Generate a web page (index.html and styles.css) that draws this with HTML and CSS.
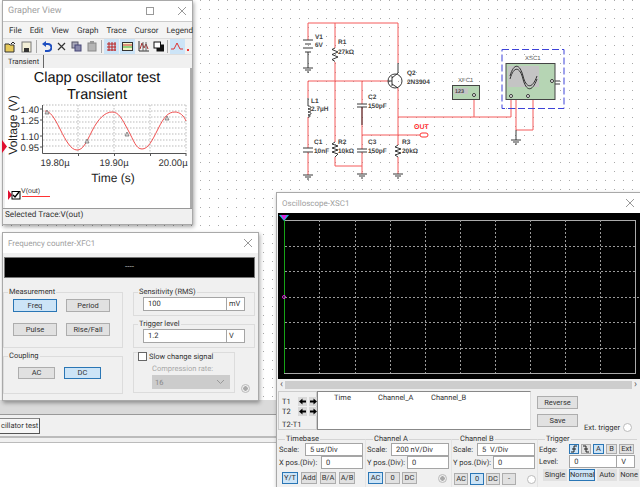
FILE: index.html
```html
<!DOCTYPE html>
<html lang="en">
<head>
<meta charset="utf-8">
<title>Clapp oscillator test</title>
<link rel="stylesheet" href="styles.css">
</head>
<body>
<main class="desktop">
  <svg class="schematic" width="640" height="190" viewBox="0 0 640 190">
    <g class="wire">
      <path d="M308 23H398V63M308 23V40M335 23V48M335 62V81M308 81H388M308 81V98M308 117V148M308 152V175M335 81V142M335 157V166H362M362 81V104M362 107V149M362 152V174M362 135H420M398 88V145M398 157V174"/>
      <path d="M398 117H511V97M474 117V95M511 96H516V130H533V95H528"/>
    </g>
    <g class="ink">
      <path d="M303 40H313M305 44H311M303 48H313M305 52H311M308 52V68M303 68H313M305 70H311M307 72H309"/>
      <path d="M335 48l-3 1.500 6 2.500-6 2.500 6 2.500-6 2.500 3 2M335 142l-3 2 6 2-6 2 6 2-6 2 6 2-3 3M398 145l-3 2 6 2-6 2 6 2-6 2 3 2"/>
      <path d="M308 98V106c4 0 4 3 0 3c4 0 4 3 0 3c4 0 4 3 0 3c3 0 3 2 0 2"/>
      <path d="M303 148H313M303 152H313M357 104H367M357 107H367M357 149H367M357 152H367M362 107V125"/>
      <path d="M303 175H313M305 177H311M307 179H309M357 174H367M359 176H365M361 178H363M393 174H403M395 176H401M397 178H399M511 140H521M513 142H519M515 144H517M516 130V140"/>
      <circle cx="395" cy="81" r="7" fill="none"/>
      <path d="M392 76V86M388 81H392M392 78L398 73V63M392 84L398 88"/>
      <path d="M552 81H560M552 84H560M552 78V84"/>
    </g>
    <rect class="probe" x="420" y="133" width="8" height="4" rx="2"/>
    <text class="lbl out" x="414" y="129">OUT</text>
    <rect class="dash" x="502" y="49.500" width="62" height="59"/>
    <rect class="inst" x="452.500" y="85.500" width="27" height="14"/>
    <rect class="lcd" x="454" y="88" width="14" height="6"/>
    <text class="lbl tiny" x="455" y="93">123</text>
    <rect class="inst" x="506" y="63.500" width="49" height="36"/>
    <rect class="lcd" x="508" y="66" width="31" height="21"/>
    <path class="sine" d="M510 76C514 62 520 64 523 76S532 90 537 76M510 79C514 65 520 67 523 79S532 93 537 79"/>
    <circle class="term" cx="511" cy="96" r="1.500"/>
    <circle class="term" cx="528" cy="96" r="1.500"/>
    <circle class="term" cx="474" cy="95" r="1.500"/>
    <circle class="term" cx="552" cy="81" r="1.500"/>
    <g class="lbl">
      <text x="315" y="39">V1</text><text x="315" y="47">6V</text>
      <text x="338" y="44">R1</text><text x="338" y="54">27kΩ</text>
      <text x="407" y="75">Q2</text><text x="407" y="84">2N3904</text>
      <text x="311" y="103">L1</text><text x="311" y="111">2.7µH</text>
      <text x="314" y="144">C1</text><text x="314" y="153">10nF</text>
      <text x="338" y="144">R2</text><text x="338" y="153">10kΩ</text>
      <text x="368" y="99">C2</text><text x="368" y="108">150pF</text>
      <text x="368" y="144">C3</text><text x="368" y="153">150pF</text>
      <text x="402" y="144">R3</text><text x="402" y="153">20kΩ</text>
      <text class="inst-name" x="458" y="82">XFC1</text><text class="inst-name" x="525" y="60">XSC1</text>
    </g>
  </svg>

  <section class="win grapher">
    <header class="title">
      <span>Grapher View</span>
      <span class="winbtns">
        <svg width="8" height="8" viewBox="0 0 8 8"><rect x=".5" y=".5" width="7" height="7" class="gl"/></svg>
        <svg width="8" height="8" viewBox="0 0 8 8"><path d="M0 0L8 8M8 0L0 8" class="gl"/></svg>
      </span>
    </header>
    <nav class="menu"><span>File</span><span>Edit</span><span>View</span><span>Graph</span><span>Trace</span><span>Cursor</span><span>Legend</span></nav>
    <div class="toolbar">
      <svg class="tool first" width="12" height="12" viewBox="0 0 12 12"><path d="M1 3h4l1 1h4v7H1z" fill="#e6c95a" stroke="#333"/><path d="M7 3l2-2 2 2" fill="none" stroke="#222"/></svg>
      <svg class="tool" width="11" height="12" viewBox="0 0 11 12"><rect x="1" y="1" width="9" height="10" fill="#f3f0d8" stroke="#777"/><rect x="3" y="7" width="5" height="4" fill="#333"/></svg>
      <i class="sep"></i>
      <svg class="tool" width="11" height="12" viewBox="0 0 11 12"><path d="M3 3h4a3 3 0 0 1 0 7H4" fill="none" stroke="#1f4fc0" stroke-width="2"/><path d="M1 3l4-3v6z" fill="#1f4fc0"/></svg>
      <svg class="tool" width="9" height="9" viewBox="0 0 9 9"><path d="M1 1l7 7M8 1L1 8" stroke="#333" stroke-width="1.200"/></svg>
      <svg class="tool" width="11" height="11" viewBox="0 0 11 11"><rect x="1" y="1" width="6" height="6" fill="#aab" stroke="#556"/><rect x="4" y="4" width="6" height="6" fill="#88a" stroke="#447"/></svg>
      <svg class="tool" width="10" height="11" viewBox="0 0 10 11"><rect x="1" y="2" width="8" height="8" fill="#b5b5b5" stroke="#888"/><rect x="3" y="0" width="4" height="3" fill="#999"/></svg>
      <i class="sep"></i>
      <span class="tb on"><svg width="11" height="11" viewBox="0 0 11 11"><path d="M1 3h9M1 6h9M1 9h9M3 1v9M6 1v9M9 1v9" stroke="#b22" fill="none"/></svg></span>
      <span class="tb on"><svg width="11" height="11" viewBox="0 0 11 11"><rect x=".5" y="1.500" width="10" height="8" fill="#f4f4c4" stroke="#333"/><path d="M1 4h9" stroke="#c33"/><path d="M1 6h9" stroke="#3a3"/></svg></span>
      <span class="tb"><svg width="11" height="11" viewBox="0 0 11 11"><path d="M1 0v10h10" stroke="#333" fill="none"/><path d="M2 8l2-6 2 5 2-4 2 5" stroke="#a33" fill="none"/><path d="M5 1v9M8 1v9" stroke="#666" fill="none"/></svg></span>
      <span class="tb narrow"><svg width="11" height="11" viewBox="0 0 11 11"><rect x="4" y="4" width="6.500" height="6" fill="#111" stroke="#111"/><rect x="1" y="1" width="6.500" height="6" fill="#fff" stroke="#111"/></svg></span>
      <i class="sep"></i>
      <span class="tb on"><svg width="12" height="9" viewBox="0 0 12 9"><path d="M0 7h3l3-6 3 6h3" stroke="#d33" fill="none"/></svg></span>
      <svg class="dots" width="9" height="9" viewBox="0 0 9 9"><path d="M1 7h2v2H1zM6 1h2v2H6z" fill="#e33"/></svg>
    </div>
    <div class="tabs"><span class="tab">Transient</span></div>
    <div class="plot">
      <svg width="187" height="140" viewBox="5 68 187 140">
        <text class="pt" x="97" y="82">Clapp oscillator test</text>
        <text class="pt" x="97" y="99">Transient</text>
        <path class="pgrid" d="M43 105H186M43 111H186M43 117H186M43 122H186M43 128H186M43 134H186M43 140H186M43 146H186M78 105V153M114 105V153M150 105V153M186 105V153"/>
        <path class="paxis" d="M42.500 105V153.500H186M40 109H43M40 120H43M40 136H43M40 147H43M78.500 153V156M114.500 153V156M150.500 153V156M186 153V156"/>
        <path class="trace" d="M45 111C50 111 54 117 60 129S71 150 77 150S86 143 92 131S105 112 112 112S122 119 128 130S136 149 142 149S152 141 158 129S168 112 175 112C180 112 184 116 186 121"/>
        <path class="tri" d="M47 110l2 4h-4zM87 139l2 4h-4zM127 132l2 4h-4zM167 116l2 4h-4z"/>
        <text class="pv" x="39" y="112.500">1.40</text>
        <text class="pv" x="39" y="123.500">1.25</text>
        <text class="pv" x="39" y="139.500">1.10</text>
        <text class="pv" x="39" y="150.500">0.95</text>
        <text class="ph" x="55" y="166">19.80µ</text>
        <text class="ph" x="114" y="166">19.90µ</text>
        <text class="ph" x="173" y="166">20.00µ</text>
        <text class="pl" x="113" y="182">Time (s)</text>
        <text class="pl" transform="translate(17 125) rotate(-90)">Voltage (V)</text>
        <path class="mark" d="M2 140l5 6.500-5 6.500zM8 190l4 5-4 5z"/>
        <rect x="12" y="191.500" width="8" height="7.500" fill="#fff" stroke="#000"/>
        <path d="M13 195l2 2 4-5" stroke="#000" fill="none" stroke-width="1.300"/>
        <text class="leg" x="21" y="193">V(out)</text>
        <path d="M22 196.500H50" stroke="#f33"/>
      </svg>
    </div>
    <footer class="status">Selected Trace:V(out)</footer>
  </section>

  <div class="strip">
    <div class="strip-top"></div>
    <div class="tabbar"><span class="filetab">cillator test</span></div>
    <div class="strip-gap"></div>
    <div class="strip-blank"></div>
  </div>

  <section class="win counter">
    <header class="title"><span>Frequency counter-XFC1</span>
      <span class="winbtns"><svg width="8" height="8" viewBox="0 0 8 8"><path d="M0 0L8 8M8 0L0 8" class="gl"/></svg></span>
    </header>
    <div class="display">----</div>
    <div class="fc-grid">
      <div class="fc-col">
        <fieldset class="g g-meas"><legend>Measurement</legend>
          <div class="btn-grid">
            <button class="btn on">Freq</button><button class="btn">Period</button>
            <button class="btn">Pulse</button><button class="btn">Rise/Fall</button>
          </div>
        </fieldset>
        <fieldset class="g g-coup"><legend>Coupling</legend>
          <div class="btn-row"><button class="btn">AC</button><button class="btn on">DC</button></div>
        </fieldset>
      </div>
      <div class="fc-col">
        <fieldset class="g g-in"><legend>Sensitivity (RMS)</legend>
          <div class="combo"><span class="field">100</span><span class="unit">mV</span></div>
        </fieldset>
        <fieldset class="g g-in"><legend>Trigger level</legend>
          <div class="combo"><span class="field">1.2</span><span class="unit">V</span></div>
        </fieldset>
        <div class="slow-wrap">
          <div class="g g-slow">
            <div class="slow-head"><i class="check"></i>Slow change signal</div>
            <div class="rate">Compression rate:</div>
            <div class="select"><span>16</span><svg width="7" height="4" viewBox="0 0 7 4"><path d="M0 0l3.500 3.500L7 0" fill="none" stroke="#999"/></svg></div>
          </div>
          <i class="radio off fc-radio"></i>
        </div>
      </div>
    </div>
  </section>

  <section class="win scope">
    <header class="title"><span>Oscilloscope-XSC1</span>
      <span class="winbtns"><svg width="8" height="8" viewBox="0 0 8 8"><path d="M0 0L8 8M8 0L0 8" class="gl"/></svg></span>
    </header>
    <div class="screen">
      <svg width="362" height="166" viewBox="278 212 362 166">
        <rect class="sframe" x="284.500" y="219.500" width="351" height="153"/>
        <path class="sgrid" d="M319.500 219V372M355.500 219V372M390.500 219V372M425.500 219V372M460.500 219V372M495.500 219V372M530.500 219V372M565.500 219V372M600.500 219V372M285 245.500H635M285 270.500H635M285 296.500H639M285 321.500H635M285 347.500H635"/>
        <path class="sgreen" d="M284.500 219V372"/>
        <path fill="#2bd" d="M279 214h10l-5 6z"/>
        <path fill="#d2d" d="M281 214h6l-3 5z"/>
        <circle cx="284" cy="296" r="1.500" fill="none" stroke="#d2d"/>
      </svg>
    </div>
    <div class="scroll"><span>‹</span><i></i><span>›</span></div>
    <div class="readout">
      <div class="cursors">
        <div class="crow"><span>T1</span>
          <svg class="arrow" width="9" height="9" viewBox="0 0 9 9"><path d="M1 4.500L4.500 1.500V3.500H8V5.500H4.500V7.500z"/></svg>
          <svg class="arrow" width="9" height="9" viewBox="0 0 9 9"><path d="M8 4.500L4.500 1.500V3.500H1V5.500H4.500V7.500z"/></svg></div>
        <div class="crow"><span>T2</span>
          <svg class="arrow" width="9" height="9" viewBox="0 0 9 9"><path d="M1 4.500L4.500 1.500V3.500H8V5.500H4.500V7.500z"/></svg>
          <svg class="arrow" width="9" height="9" viewBox="0 0 9 9"><path d="M8 4.500L4.500 1.500V3.500H1V5.500H4.500V7.500z"/></svg></div>
        <div class="crow"><span>T2-T1</span></div>
      </div>
      <div class="table"><span>Time</span><span>Channel_A</span><span>Channel_B</span></div>
      <div class="actions">
        <button class="btn">Reverse</button>
        <button class="btn">Save</button>
      </div>
      <div class="ext"><span>Ext. trigger</span><i class="radio"></i></div>
    </div>
    <div class="controls">
      <fieldset class="c c-time"><legend>Timebase</legend>
        <div class="r"><label>Scale:</label><span class="field s1">5 us/Div</span></div>
        <div class="r"><label>X pos.(Div):</label><span class="field s2">0</span></div>
        <div class="r b"><button class="btn on">Y/T</button><button class="btn">Add</button><button class="btn">B/A</button><button class="btn">A/B</button></div>
      </fieldset>
      <fieldset class="c c-a"><legend>Channel A</legend>
        <div class="r"><label>Scale:</label><span class="field s1">200 nV/Div</span></div>
        <div class="r"><label>Y pos.(Div):</label><span class="field s2">0</span></div>
        <div class="r b"><button class="btn on">AC</button><button class="btn">0</button><button class="btn">DC</button><i class="radio off"></i></div>
      </fieldset>
      <fieldset class="c c-b"><legend>Channel B</legend>
        <div class="r"><label>Scale:</label><span class="field s1">5 &nbsp;V/Div</span></div>
        <div class="r"><label>Y pos.(Div):</label><span class="field s2">0</span></div>
        <div class="r b"><button class="btn">AC</button><button class="btn on">0</button><button class="btn">DC</button><button class="btn">-</button><i class="radio"></i></div>
      </fieldset>
      <fieldset class="c c-t"><legend>Trigger</legend>
        <div class="r edge"><label>Edge:</label>
          <button class="btn on sq"><svg width="8" height="8" viewBox="0 0 8 8"><path d="M7 1H4V7H1M2 4h4" fill="none" stroke="#222"/></svg></button>
          <button class="btn sq"><svg width="8" height="8" viewBox="0 0 8 8"><path d="M1 1H4V7H7M2 4h4" fill="none" stroke="#222"/></svg></button>
          <button class="btn on ch">A</button><button class="btn ch">B</button><button class="btn ch">Ext</button></div>
        <div class="r"><label>Level:</label><span class="field lvl">0</span><span class="field lvu">V</span></div>
        <div class="r b"><button class="btn">Single</button><button class="btn on">Normal</button><button class="btn">Auto</button><button class="btn">None</button></div>
      </fieldset>
    </div>
  </section>
</main>
</body>
</html>
```
FILE: styles.css
```css
* { box-sizing: border-box; }
html, body { margin: 0; padding: 0; }
body { width: 640px; height: 487px; overflow: hidden; background: #fff; font-family: Roboto, "Liberation Sans", sans-serif; font-size: 7.500px; color: #333; text-rendering: geometricPrecision; }
button { font: inherit; color: inherit; padding: 0; }
i { font-style: normal; display: block; }

.desktop { position: relative; width: 640px; height: 487px; overflow: hidden;
  background-image: radial-gradient(circle at center, #a8a8a8 0, #a8a8a8 .6px, transparent 1px);
  background-size: 9px 9px; background-position: 7px 5px; }
.schematic { position: absolute; left: 0; top: 0; }
.wire path { fill: none; stroke: #f45a5a; stroke-width: 1; }
.ink path, .ink circle { fill: none; stroke: #222; stroke-width: .9; }
.probe { fill: #fff; stroke: #f33; }
.dash { fill: none; stroke: #3d43d8; stroke-width: 1; stroke-dasharray: 7 3; }
.inst { fill: #b6d5b4; stroke: #444; }
.lcd { fill: #c4c4c4; }
.sine { fill: none; stroke: #333; stroke-width: 1; }
.term { fill: #fff; stroke: #333; }
.lbl { font-family: "Liberation Sans", sans-serif; font-size: 6.500px; font-weight: 700; fill: #444; }
.lbl.out { fill: #f33; font-size: 7px; }
.lbl.tiny { font-size: 5.500px; }
.inst-name { font-size: 6px; font-weight: 400; fill: #555; }

.win { position: absolute; background: #f0f0f0; border: 1px solid #a9a9a9; box-shadow: 1px 2px 4px rgba(0,0,0,.35); display: flex; flex-direction: column; }
.title { height: 20px; flex: none; background: #fff; display: flex; align-items: center; justify-content: space-between; padding: 0 6px 0 5px; color: #a0a0a0; font-size: 8px; }
.winbtns { display: flex; gap: 24px; align-items: center; }
.gl { fill: none; stroke: #999; stroke-width: 1; }

.grapher { left: 2px; top: 0; width: 191px; height: 225px; }
.grapher .title { font-size: 9px; }
.menu { height: 17px; flex: none; display: flex; gap: 8px; align-items: center; padding: 0 0 0 6px; font-size: 8.100px; background: #f4f4f4; border-top: 1px solid #ccc; white-space: nowrap; }
.toolbar { height: 16px; flex: none; display: flex; align-items: center; overflow: hidden; border-top: 1px solid #ddd; }
.tool { flex: none; margin: 0 2.500px; }
.tool.first { margin-left: 1px; }
.sep { width: 1px; height: 13px; background: #aaa; margin: 0 2px 0 1px; flex: none; }
.tb { width: 15px; height: 15px; flex: none; margin-right: 1px; display: flex; align-items: center; justify-content: center; }
.tb.on { background: #cce4f7; }
.tb.narrow { width: 13px; }
.dots { flex: none; }
.tabs { height: 14px; flex: none; padding-left: 1px; display: flex; border-top: 1px solid #ddd; }
.tab { padding: 0 4px; border-right: 1px solid #666; line-height: 13px; }
.plot { height: 140px; flex: none; margin-left: 2px; background: #fff; border-right: 2px solid #aaa; }
.plot svg { display: block; overflow: visible; }
.pt { font-family: "Liberation Sans", sans-serif; font-size: 14.500px; text-anchor: middle; fill: #111; }
.pv, .ph { font-family: "Liberation Sans", sans-serif; font-size: 9.500px; fill: #333; }
.pv { text-anchor: end; }
.ph { text-anchor: middle; }
.pl { font-family: "Liberation Sans", sans-serif; font-size: 12px; text-anchor: middle; fill: #222; }
.pgrid { fill: none; stroke: #aaa; stroke-width: .8; stroke-dasharray: 1.500 1.500; }
.paxis { fill: none; stroke: #555; }
.trace { fill: none; stroke: #f05050; stroke-width: 1; }
.tri { fill: #ddd; stroke: #666; stroke-width: .7; }
.mark { fill: #e01030; }
.leg { font-family: "Liberation Sans", sans-serif; font-size: 7px; fill: #333; }
.status { flex: 1; padding: 0 0 0 2px; font-size: 8.200px; line-height: 13px; border-top: 1px solid #999; }

.strip { position: absolute; left: 0; top: 400px; width: 640px; height: 87px; display: flex; flex-direction: column; background: #fff; }
.strip-top { height: 15px; flex: none; background: #dadada; border-bottom: 1px solid #999; }
.tabbar { height: 23px; flex: none; background: #f0f0f0; padding-top: 3px; border-bottom: 2px solid #bbb; }
.filetab { display: block; width: 40px; height: 16px; border: 1px solid #555; border-left: 0; border-top-color: #888; background: #f6f6f6; font-size: 7.500px; line-height: 14px; white-space: nowrap; padding-left: 1px; }
.strip-gap { height: 5px; flex: none; background: #f0f0f0; border-bottom: 1px solid #bbb; }
.strip-blank { flex: 1; background: #fff; }

.counter { left: 2px; top: 232px; width: 257px; height: 169px; }
.display { margin: 4px 3px 0 1px; height: 21px; flex: none; background: #000; border: 1px solid #777; color: #bbb; text-align: center; font-size: 8px; line-height: 18px; }
.fc-grid { display: grid; grid-template-columns: 120px 122px; column-gap: 10px; padding: 10px 0 0 0; flex: 1; }
.fc-col { display: flex; flex-direction: column; gap: 4px; }
.g { margin: 0; border: 1px solid #dcdcdc; padding: 0; min-width: 0; }
.g legend { padding: 0 1px; margin-left: 4px; line-height: 8px; }
.g-meas { height: 60px; }
.btn-grid { display: grid; grid-template-columns: 44px 44px; gap: 11px 9px; margin: 3px 0 0 9px; }
.btn { display: block; background: #e1e1e1; border: 1px solid #adadad; text-align: center; line-height: 1; white-space: nowrap; }
.btn.on { background: #cce4f7; border-color: #2a76b5; }
.btn-grid .btn { height: 13px; }
.g-coup { height: 42px; }
.btn-row { display: flex; gap: 9px; margin: 7px 0 0 14px; }
.btn-row .btn { width: 37px; height: 12px; }
.g-in { height: 28px; }
.combo { display: flex; width: 102px; margin: 1px 0 0 9px; }
.field { display: block; background: #fff; border: 1px solid #a5a5a5; line-height: 11px; padding-left: 4px; white-space: nowrap; }
.combo .field { width: 84px; height: 14px; }
.combo .unit { width: 18px; height: 14px; background: #fff; border: 1px solid #a5a5a5; border-left: 0; text-align: left; padding-left: 2px; line-height: 11px; }
.slow-wrap { display: flex; gap: 6px; align-items: flex-end; }
.g-slow { width: 102px; height: 41px; }
.slow-head { display: flex; align-items: center; gap: 2px; margin: -1px 0 0 4px; width: 74px; background: #f0f0f0; white-space: nowrap; }
.check { width: 9px; height: 9px; background: #fff; border: 1px solid #666; flex: none; }
.rate { color: #a8a8a8; line-height: 10px; margin: 3px 0 0 18px; }
.select { width: 78px; height: 14px; margin: 1px 0 0 18px; background: #ccc; color: #888; display: flex; align-items: center; justify-content: space-between; padding: 0 6px 0 3px; }
.radio { width: 9px; height: 9px; border-radius: 50%; background: #fff; border: 1px solid #bbb; flex: none; }
.radio.off { background: radial-gradient(circle, #aaa 0, #aaa 2px, #eee 2.500px); }

.scope { left: 276px; top: 192px; width: 365px; height: 296px; }
.screen { height: 166px; flex: none; background: #000; margin-left: 1px; }
.screen svg { display: block; }
.sframe { fill: none; stroke: #aaa; }
.sgrid { fill: none; stroke: #9a9a9a; stroke-dasharray: 2 2; }
.sgreen { stroke: #16a316; }
.scroll { height: 11px; flex: none; display: flex; align-items: center; gap: 2px; color: #555; padding: 0 3px; font-size: 10px; line-height: 10px; }
.scroll i { flex: 1; height: 8px; background: #cdcdcd; }
.readout { height: 45px; flex: none; display: flex; padding: 1px 0 0 1px; }
.cursors { width: 39px; height: 39px; flex: none; border: 1px solid #ccc; padding: 4px 0 0 3px; display: flex; flex-direction: column; }
.crow { display: flex; align-items: center; height: 10px; gap: 2px; }
.crow span { width: 14px; flex: none; }
.crow:last-child { margin-top: 3px; }
.crow:last-child span { width: auto; }
.arrow { display: block; background: #d8d8d8; fill: #000; flex: none; }
.table { width: 214px; height: 39px; flex: none; background: #fff; border: 1px solid #888; border-right-color: #ddd; display: flex; padding: 0 0 0 16px; line-height: 11px; }
.table span:nth-child(1) { width: 44px; }
.table span:nth-child(2) { width: 53px; }
.actions { width: 42px; flex: none; margin-left: 6px; padding-top: 5px; display: flex; flex-direction: column; gap: 5px; }
.actions .btn { height: 13px; width: 41px; }
.ext { flex: 1; display: flex; align-items: flex-start; gap: 3px; padding: 32px 0 0 5px; white-space: nowrap; }
.controls { flex: 1; display: grid; grid-template-columns: 88px 86px 86px 99px; padding-left: 1px; }
.c { margin: 0; padding: 0 0 0 1px; border: 0; border-top: 1px solid #d4d4d4; border-right: 1px solid #e4e4e4; min-width: 0; }
.c legend { padding: 0 1px; margin-left: 6px; line-height: 8px; }
.r { display: flex; align-items: center; height: 13px; padding-right: 2px; }
.r label { white-space: nowrap; flex: none; }
.s1 { margin-left: auto; width: 58px; height: 13px; }
.s2 { margin-left: auto; width: 42px; height: 13px; }
.r.b { margin-top: 3px; height: 12px; padding-left: 1px; padding-right: 0; }
.r.b .btn { height: 12px; flex: none; }
.c-time .r.b { gap: 3px; padding-left: 3px; }
.c-time .r.b .btn { width: 16px; }
.c-a .r.b { gap: 2px; }
.c-a .r.b .btn { width: 15px; }
.c-a .radio { margin-left: 19px; }
.c-b .r.b { gap: 2px; margin-top: 4px; }
.c-b .r.b .btn { width: 14px; }
.c-b .radio { margin-left: 9px; }
.c-t .r.edge { gap: 2px; height: 12px; }
.c-t .edge label { width: 28px; }
.sq { width: 10px; height: 10px; display: flex; align-items: center; justify-content: center; }
.ch { width: 11px; height: 10px; }
.ch:last-child { width: 15px; }
.lvl { margin-left: 11px; width: 49px; height: 13px; }
.lvu { width: 18px; height: 13px; border-left: 0; }
.c-t { border-right: 0; }
.c-t .r.b { gap: 2px; padding-left: 4px; margin-top: 1px; }
.c-t .r.b .btn { border-color: #e1e1e1; }
.c-t .r.b .btn:nth-child(1) { width: 24px; }
.c-t .r.b .btn:nth-child(2) { width: 26px; }
.c-t .r.b .btn:nth-child(3) { width: 20px; }
.c-t .r.b .btn:nth-child(4) { width: 20px; }
.c-t .r.b .btn.on { border-color: #2a76b5; }
```
